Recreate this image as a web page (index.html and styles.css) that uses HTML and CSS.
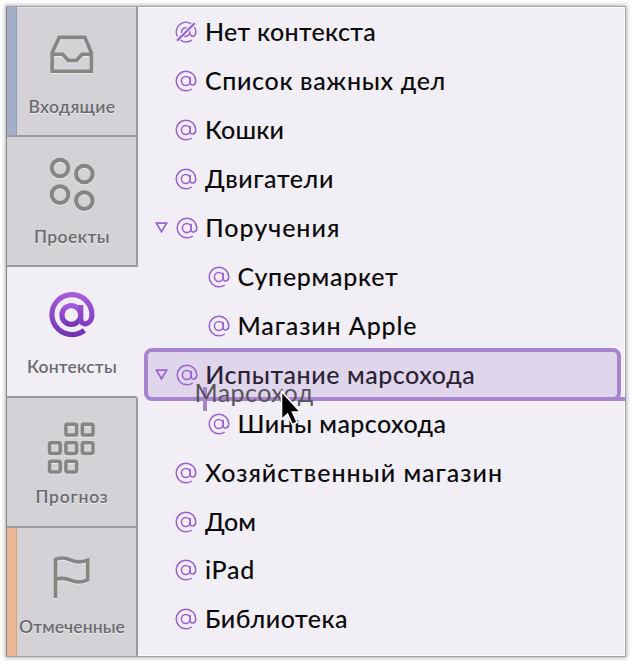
FILE: index.html
```html
<!DOCTYPE html>
<html lang="ru">
<head>
<meta charset="utf-8">
<title>Контексты</title>
<link rel="stylesheet" href="styles.css">
</head>
<body>
<svg class="defs" width="0" height="0">
  <defs>
    <linearGradient id="violet" x1="0" y1="0" x2="0" y2="1"><stop offset="0" stop-color="#a45bdc"/><stop offset="1" stop-color="#7435b4"/></linearGradient>
    <symbol id="at" viewBox="0 0 22 22">
      <circle cx="10.8" cy="11" r="4.4"/>
      <path d="M15.2 6.7v6.1c0 3.4 5.6 2.9 5.6-1.9a9.8 9.8 0 1 0-9.8 9.9c2.2 0 4.2-.7 5.8-1.8"/>
    </symbol>
    <symbol id="none" viewBox="0 0 22 22">
      <path d="M5.500 19.100a9.800 9.800 0 0 0 11.200.1M2.400 15.500A9.800 9.800 0 0 1 16.200 2.600M19.400 6c2.600 4.700 1.200 9.200-1.500 9.200-1.500 0-2.500-.8-2.600-2.300M6.500 11.800a4.400 4.400 0 0 1 5.200-5M14.800 10.300a4.400 4.400 0 0 1-5.500 4.900"/>
      <path class="slash" d="M2 19.800 19.700 2.200"/>
    </symbol>
  </defs>
</svg>
<div class="window">
  <nav class="tabs">
    <div class="tab blue">
      <svg class="icon" viewBox="0 0 50 50"><path d="M12.200 7.400h25.700L44.400 23v18.300H5.100V23zM5.500 24.200h10.200l5.600 6.300h8.200l5.600-6.300h9.200"/></svg>
      <span class="label" data-width="87">Входящие</span>
    </div>
    <div class="tab">
      <svg class="icon" viewBox="0 0 50 50"><g stroke-width="4"><circle cx="13" cy="8" r="8.300"/><circle cx="37.300" cy="14" r="8.300"/><circle cx="13" cy="34.600" r="8.300"/><circle cx="37.300" cy="40.600" r="8.300"/></g></svg>
      <span class="label" data-width="76">Проекты</span>
    </div>
    <div class="tab active">
      <svg class="icon" viewBox="0 0 50 50"><g stroke="url(#violet)" stroke-width="5.200"><circle cx="24.300" cy="25" r="9.400"/><path d="M33.700 15v13.500c0 8.400 11.200 6.500 11.200-3.500A20 20 0 1 0 25.400 44.600c4.800 0 8.700-1.700 12-4.200"/></g></svg>
      <span class="label" data-width="90">Контексты</span>
    </div>
    <div class="tab">
      <svg class="icon" viewBox="0 0 50 50"><g stroke-width="3.500"><rect x="18.900" y="3.300" width="10.700" height="10.700" rx="1.600"/><rect x="35.300" y="3.300" width="10.700" height="10.700" rx="1.600"/><rect x="2.500" y="21.700" width="10.700" height="10.700" rx="1.600"/><rect x="18.900" y="21.700" width="10.700" height="10.700" rx="1.600"/><rect x="35.300" y="21.700" width="10.700" height="10.700" rx="1.600"/><rect x="2.500" y="40.200" width="10.700" height="10.700" rx="1.600"/><rect x="18.900" y="40.200" width="10.700" height="10.700" rx="1.600"/></g></svg>
      <span class="label" data-width="73">Прогноз</span>
    </div>
    <div class="tab orange">
      <svg class="icon" viewBox="0 0 50 50"><path d="M8.500 47V8.500c4-1.800 9-2.300 14.800.3C29.500 11.500 34 12 40.700 9.200V28.800c-6.200 2.900-12 2.700-17.400.3C18 26.800 13.500 26.800 8.500 28.400"/></svg>
      <span class="label" data-width="106">Отмеченные</span>
    </div>
  </nav>
  <main class="list">
    <div class="row"><svg class="at"><use href="#none"/></svg><span class="name" data-width="171">Нет контекста</span></div>
    <div class="row"><svg class="at"><use href="#at"/></svg><span class="name" data-width="241">Список важных дел</span></div>
    <div class="row"><svg class="at"><use href="#at"/></svg><span class="name" data-width="79">Кошки</span></div>
    <div class="row"><svg class="at"><use href="#at"/></svg><span class="name" data-width="129">Двигатели</span></div>
    <div class="row"><svg class="arrow" viewBox="0 0 13 12"><path d="M1.400 1.200h10.200L6.500 9.800z"/></svg><svg class="at"><use href="#at"/></svg><span class="name" data-width="135">Поручения</span></div>
    <div class="row child"><svg class="at"><use href="#at"/></svg><span class="name" data-width="161">Супермаркет</span></div>
    <div class="row child"><svg class="at"><use href="#at"/></svg><span class="name" data-width="180">Магазин Apple</span></div>
    <div class="row target"><svg class="arrow" viewBox="0 0 13 12"><path d="M1.400 1.200h10.200L6.500 9.800z"/></svg><svg class="at"><use href="#at"/></svg><span class="name" data-width="270">Испытание марсохода</span>
      <i class="insert"></i>
      <span class="ghost" data-width="119">Марсоход</span>
      <svg class="cursor" viewBox="0 0 24 38"><path d="M2.500 2.500v28l6-5.500 4.800 10.500 5-2.200-4.800-10.300h8z"/></svg>
    </div>
    <div class="row child"><svg class="at"><use href="#at"/></svg><span class="name" data-width="209">Шины марсохода</span></div>
    <div class="row"><svg class="at"><use href="#at"/></svg><span class="name" data-width="298">Хозяйственный магазин</span></div>
    <div class="row"><svg class="at"><use href="#at"/></svg><span class="name" data-width="51">Дом</span></div>
    <div class="row"><svg class="at"><use href="#at"/></svg><span class="name" data-width="50">iPad</span></div>
    <div class="row"><svg class="at"><use href="#at"/></svg><span class="name" data-width="143">Библиотека</span></div>
  </main>
</div>
<script src="fit.js"></script>
</body>
</html>
```
FILE: styles.css
```css
* { box-sizing: border-box; }
body { margin: 0; padding: 6px; background: #fff; font-family: Lato, "Open Sans", sans-serif; overflow: hidden; }
.defs { position: absolute; }
svg { display: block; flex: none; overflow: visible; fill: none; }
.window { display: flex; width: 620px; height: 651px; border: 1px solid #a3a3a3; border-left-color: #858585; background: #f1eef6; box-shadow: 0 0 4px 1px rgba(0,0,0,.3), inset -1px 1px #fff, inset 0 -1px #fff; }
.tabs { width: 131px; flex: none; display: grid; grid-template-rows: 130px 130px 130.500px 130px 1fr; }
.tab { display: flex; flex-direction: column; align-items: center; padding: 23px 0 0 1px; background: #d3d2d7; border-right: 2px solid #999b9a; border-bottom: 2px solid #999b9a; }
.tab:last-child { border-bottom: 0; }
.tab.active { background: #f1eef6; border-right-color: transparent; background-clip: padding-box; }
.tab.blue { box-shadow: inset 9px 0 #a3aec8, inset 10px 0 #8f9cbb, inset 0 1px #e6e6ea; }
.tab.orange { box-shadow: inset 9px 0 #e9b795, inset 10px 0 #d8a27e; }
.icon { width: 50px; height: 50px; stroke: #858585; stroke-width: 3.600; filter: drop-shadow(0 1px 0 rgba(255,255,255,.5)); }
.label { margin-top: 15.500px; font-size: 17.500px; line-height: 22px; font-weight: 600; color: #6b6a6e; white-space: nowrap; text-shadow: 0 1px rgba(255,255,255,.6); }
.list { flex: 1; padding-top: 1px; }
.row { position: relative; height: 48.920px; display: flex; align-items: center; padding-left: 37.300px; color: #0a0a0a; }
.row.child { padding-left: 69.800px; }
.at { width: 22px; height: 22px; margin-right: 7.700px; stroke: #9a62d0; stroke-width: 1.500; }
.slash { stroke-width: 2.300; }
.name, .ghost { font-size: 25px; font-weight: 500; line-height: 32px; white-space: nowrap; }
.name { padding-bottom: 2px; }
.arrow { width: 13px; height: 12px; margin: 0 8px 0 -20.700px; stroke: #9a62d0; stroke-width: 1.700; }
.target { width: 477px; height: 53px; margin: -2px 0 -2.080px 6px; padding-left: 27.300px; border: 4px solid #a785cc; border-radius: 8px; background: #e0d6eb; color: #2c2235; }
.insert { position: absolute; left: 55px; right: -9px; top: 45px; height: 4px; background: #a785cc; }
.insert::before { content: ""; position: absolute; left: 0; top: -10px; width: 4px; height: 24px; background: #a785cc; }
.ghost { position: absolute; left: 46.500px; top: 23.500px; font-weight: 400; color: #55525a; }
.cursor { position: absolute; left: 131px; top: 37px; width: 24px; height: 38px; fill: #000; stroke: #fff; stroke-width: 1.600; z-index: 2; }
```
FILE: fit.js
```js
for (const el of document.querySelectorAll('[data-width]')) {
  const natural = el.getBoundingClientRect().width;
  const gaps = el.textContent.length;
  el.style.letterSpacing = ((el.dataset.width - natural) / gaps).toFixed(3) + 'px';
}
```
